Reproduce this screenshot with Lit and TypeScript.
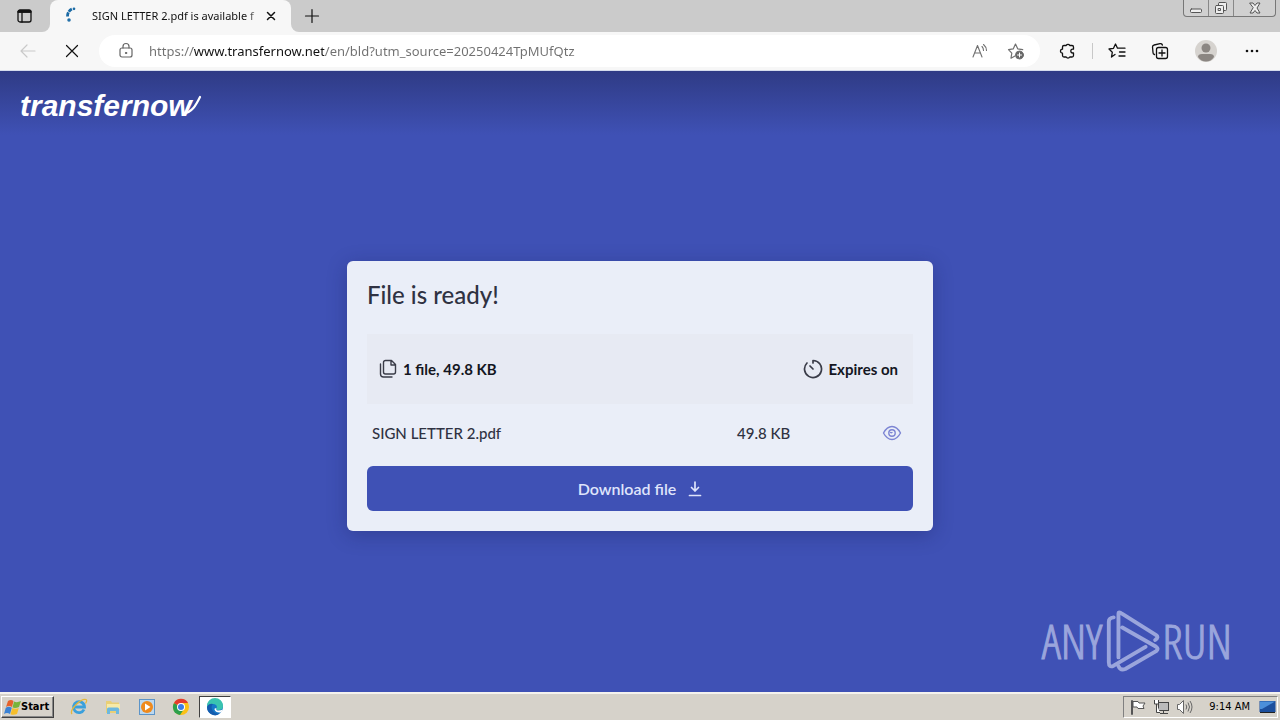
import { LitElement, html, css } from "lit";
import { customElement } from "lit/decorators.js";

const browserFont = css`"Noto Sans", "Open Sans", sans-serif`;

@customElement("browser-chrome")
class BrowserChrome extends LitElement {
  static styles = css`
    :host { display: block; font-family: ${browserFont}; background: #cbcbcb; }
    * { box-sizing: border-box; }
    button { border: 0; background: none; padding: 0; margin: 0; display: flex; align-items: center; justify-content: center; color: #111; font: inherit; }
    svg { display: block; fill: none; stroke: currentColor; stroke-linecap: round; stroke-linejoin: round; }
    .solid { fill: currentColor; stroke: none; }
    .strip { display: flex; height: 32px; align-items: stretch; }
    .lead { width: 50px; background: #cbcbcb; border-radius: 0 0 8px 0; }
    .under { background: #f7f7f7; display: flex; }
    .tab { width: 241px; background: #f7f7f7; border-radius: 8px 8px 0 0; display: flex; align-items: center; gap: 2px; padding: 0 12px 0 14px; }
    .spinner { color: #1a6aa5; margin-right: 10px; }
    .caption { flex: 1; min-width: 0; font-size: 11px; line-height: 16px; white-space: nowrap; color: #111; -webkit-mask-image: linear-gradient(90deg, #000 90%, transparent 105%); mask-image: linear-gradient(90deg, #000 90%, transparent 105%); }
    .rest { flex: 1; display: flex; justify-content: space-between; align-items: flex-start; background: #cbcbcb; border-radius: 0 0 0 8px; }
    .restwrap { flex: 1; display: flex; background: #f7f7f7; }
    .plus { width: 42px; height: 32px; }
    .window { display: flex; height: 17px; margin-right: 4px; border: 1px solid #777; border-top: 0; border-radius: 0 0 4px 4px; background: #d0d0d0; color: #555; }
    .window button { width: 25px; color: #555; border-right: 1px solid #888; }
    .window button:last-child { width: 41px; border-right: 0; }
    .bar { display: flex; align-items: center; height: 39px; background: #f7f7f7; border-bottom: 1px solid #d5dcec; padding-right: 5px; }
    .nav { width: 56px; height: 32px; }
    .back { color: #c9c9c9; }
    .stop { width: 32px; }
    .field { flex: 1; height: 32px; margin: 0 8px 0 11px; border-radius: 16px; background: #fff; display: flex; align-items: center; padding: 0 14px 0 20px; gap: 16px; color: #666; }
    .url { flex: 1; min-width: 0; border: 0; outline: 0; padding: 0; font-family: ${browserFont}; font-size: 13px; line-height: 20px; color: transparent; background: linear-gradient(90deg, #707070 44px, #111 44px, #111 175px, #707070 175px); -webkit-background-clip: text; background-clip: text; }
    .field button { color: #707070; width: 20px; }
    .tool { width: 40px; height: 32px; }
    .divider { width: 1px; height: 16px; background: #c8c8c8; margin: 0 4px; }
    .tools { display: flex; align-items: center; }
    .wide { width: 46px; }
  `;
  render() {
    return html`
      <div class="strip">
        <div class="under"><button class="lead" aria-label="Tab actions">
          <svg width="16" height="16" viewBox="0 0 16 16"><rect x="1" y="2" width="13" height="12" rx="2" stroke-width="1.300"/><path d="M1 4h13M5 5v9" stroke-width="1.300"/><path d="M2 3.400h11" stroke-width="2.600"/></svg>
        </button></div>
        <div class="tab">
          <svg class="spinner" width="16" height="18" viewBox="0 0 16 18"><path d="M3.500 9.500C3.500 5.500 5.500 3 8.500 1.800" stroke-width="2.800" stroke-dasharray="4 1" stroke-linecap="butt"/><circle cx="10" cy="1.800" r=".6" stroke-width="1.500"/><circle cx="5" cy="13" r="1" stroke-width="1.500"/></svg>
          <span class="caption">SIGN LETTER 2.pdf is available f</span>
          <button aria-label="Close tab"><svg width="16" height="16" viewBox="0 0 16 16"><path d="M4.500 4.500l7 7M11.500 4.500l-7 7" stroke-width="1.500"/></svg></button>
        </div>
        <div class="restwrap"><div class="rest">
          <button class="plus" aria-label="New tab"><svg width="16" height="16" viewBox="0 0 16 16"><path d="M8 1.500v13M1.500 8h13" stroke-width="1.200"/></svg></button>
          <div class="window">
            <button aria-label="Minimize"><svg width="14" height="14" viewBox="0 0 14 14"><rect x="1.500" y="8" width="11" height="3.500" rx="1" fill="#eee"/></svg></button>
            <button aria-label="Restore"><svg width="14" height="14" viewBox="0 0 14 14"><rect x="4.500" y="1.500" width="8" height="8" rx="1" fill="#eee"/><rect x="1.500" y="4.500" width="8" height="8" rx="1" fill="#eee"/><rect x="4.500" y="7.500" width="2" height="2"/></svg></button>
            <button aria-label="Close"><svg width="14" height="14" viewBox="0 0 14 14"><path d="M2 2h3l2 2.500L9 2h3L9 7l3 5H9L7 9.500 5 12H2l3-5z" fill="#eee"/></svg></button>
          </div>
        </div></div>
      </div>
      <div class="bar">
        <button class="nav back" aria-label="Back"><svg width="18" height="16" viewBox="0 0 18 16"><path d="M16 8H2M8 2L2 8l6 6" stroke-width="1.200"/></svg></button>
        <button class="nav stop" aria-label="Stop"><svg width="16" height="16" viewBox="0 0 16 16"><path d="M2.500 2.500l11 11M13.500 2.500l-11 11" stroke-width="1.200"/></svg></button>
        <div class="field">
          <svg width="14" height="18" viewBox="0 0 14 18"><rect x="1" y="6" width="12" height="9" rx="2" stroke-width="1.200"/><path d="M4 6V4.500a3 3 0 0 1 6 0V6" stroke-width="1.200"/><circle cx="7" cy="11" r=".7" fill="currentColor"/></svg>
          <input class="url" aria-label="Address" .value=${"https://www.transfernow.net/en/bld?utm_source=20250424TpMUfQtz"} />
          <button aria-label="Read aloud"><svg width="18" height="18" viewBox="0 0 18 18"><path d="M2 15L6.500 3.500 11 15M3.500 11h6M11 4.500q1.500 1.500 1.500 4M12.500 2.500q3 2.500 3 6" stroke-width="1.100"/></svg></button>
          <button aria-label="Add to favorites"><svg width="18" height="18" viewBox="0 0 18 18"><path d="M8 14l-4 2.200.8-5L1.500 7.600l4.700-.7L8.500 2l2.200 4.800 5 .8" stroke-width="1.200"/><circle cx="12.500" cy="13" r="4" fill="#666"/><path d="M12.500 11v4M10.500 13h4" stroke="#fff"/></svg></button>
        </div>
        <div class="tools">
          <button class="tool" aria-label="Extensions"><svg width="18" height="18" viewBox="0 0 18 18"><path d="M5 3.500h2.200a2 2 0 0 1 3.600 0H13a1.500 1.500 0 0 1 1.500 1.500v2.200h-.8a1.900 1.900 0 0 0 0 3.800h.8V13.500a1.500 1.500 0 0 1-1.500 1.500h-2.200a2 2 0 0 1-3.600 0H5a1.500 1.500 0 0 1-1.500-1.500V11.200a2 2 0 0 1 0-4V5A1.500 1.500 0 0 1 5 3.500z" stroke-width="1.300"/></svg></button>
          <span class="divider"></span>
          <button class="tool" aria-label="Favorites"><svg width="18" height="18" viewBox="0 0 18 18"><path d="M7 12.500L3.500 15l.8-4.700L1 7l4.500-.7L7.500 2l2 4.200H17M11.500 10H17M11 14h6" stroke-width="1.300"/></svg></button>
          <button class="wide tool" aria-label="Collections"><svg width="18" height="18" viewBox="0 0 18 18"><path d="M3.500 12.500a2 2 0 0 1-1.500-2L1.500 5a2 2 0 0 1 1.600-2L9 1.600a2 2 0 0 1 2.400 1.600" stroke-width="1.300"/><rect x="5.500" y="5.500" width="11" height="11" rx="2" stroke-width="1.300"/><path d="M11 8v6M8 11h6" stroke-width="1.300"/></svg></button>
          <button class="wide tool" aria-label="Profile"><svg class="solid" width="22" height="22" viewBox="0 0 22 22"><circle cx="11" cy="11" r="11" fill="#d6d3cf"/><circle cx="11" cy="8" r="4.500" fill="#8b8682"/><path d="M3 17q0-3 4-3h8q4 0 4 3-3 4.500-8 4.500T3 17z" fill="#8b8682"/></svg></button>
          <button class="wide tool" aria-label="Settings and more"><svg class="solid" width="16" height="16" viewBox="0 0 16 16"><circle cx="3" cy="8" r="1.300"/><circle cx="8" cy="8" r="1.300"/><circle cx="13" cy="8" r="1.300"/></svg></button>
        </div>
      </div>`;
  }
}

@customElement("transfer-page")
class TransferPage extends LitElement {
  static styles = css`
    :host { display: flex; flex-direction: column; flex: 1; min-height: 0; position: relative; font-family: Lato, "Open Sans", sans-serif; background: linear-gradient(#2f3b85, #3f51b5 64px); color: #2f3242; }
    * { box-sizing: border-box; }
    svg { display: block; fill: none; stroke: currentColor; stroke-linecap: round; stroke-linejoin: round; }
    header { height: 70px; padding: 0 20px; display: flex; align-items: center; }
    .brand { display: flex; align-items: center; color: #fff; text-decoration: none; font: italic 700 30px/36px "Liberation Sans", Arial, sans-serif; }
    .tail { margin-left: -10px; }
    main { flex: 1; display: flex; align-items: center; justify-content: center; padding: 0 20px 41px; }
    .card { width: 100%; max-width: 586px; padding: 20px; border-radius: 6px; background: #eaeef8; box-shadow: 0 4px 20px rgba(20, 28, 80, .3); }
    h1 { margin: 0 0 26px; font-size: 24px; line-height: 27px; font-weight: 500; }
    .summary { display: flex; justify-content: space-between; align-items: center; height: 70px; padding: 0 15px 0 12px; background: #e7eaf3; font-size: 15px; line-height: 20px; font-weight: 700; color: #14161f; }
    .item { display: flex; align-items: center; gap: 6px; }
    .item svg { color: #3a3c48; }
    table { width: 100%; border-collapse: collapse; font-size: 15px; line-height: 20px; font-weight: 500; }
    td { height: 58px; padding: 0 5px; }
    .size { width: 145px; }
    .action { width: 36px; }
    .eye { border: 0; padding: 0; background: none; color: #7c84d3; display: block; }
    .download { width: 100%; height: 45px; margin-top: 4px; border: 0; border-radius: 6px; background: #3f51b5; color: #dfe4fb; font: 600 16px/20px Lato, sans-serif; display: flex; align-items: center; justify-content: center; gap: 12px; }
    .watermark { position: absolute; right: 48px; bottom: 20px; display: flex; align-items: center; gap: 1px; color: #9aa5dc; font-family: "Open Sans Condensed Light", "Noto Sans ExtraCondensed", "Liberation Sans Narrow", "Roboto Condensed", sans-serif; font-size: 48px; line-height: 60px; -webkit-text-stroke: 1px #9aa5dc; }
  `;
  render() {
    return html`
      <header><a class="brand" href="#" aria-label="transfernow"><span>transfernow</span>
        <svg class="tail" width="20" height="22" viewBox="0 0 20 22"><path d="M1 18.500C10 18 14 10 18 2" stroke-width="2.200"/></svg></a></header>
      <main>
        <section class="card">
          <h1>File is ready!</h1>
          <div class="summary">
            <span class="item"><svg width="18" height="20" viewBox="0 0 18 20" stroke-width="1.400"><path d="M6.500 1.500h6l4 4V13a2 2 0 0 1-2 2h-8a2 2 0 0 1-2-2V3.500a2 2 0 0 1 2-2zM12 1.500V6h4.500M1.500 5v10a3 3 0 0 0 3 3H13"/></svg>1 file, 49.8 KB</span>
            <span class="item"><svg width="20" height="20" viewBox="0 0 20 20" stroke-width="1.700"><path d="M10 4V1.500a8.500 8.500 0 1 1-6 2.500M7 7l3 3"/></svg>Expires on</span>
          </div>
          <table><tbody><tr>
            <td>SIGN LETTER 2.pdf</td><td class="size">49.8 KB</td>
            <td class="action"><button class="eye" aria-label="Preview"><svg width="20" height="16" viewBox="0 0 20 16" stroke-width="1.400"><path d="M1.500 8Q5 1.500 10 1.500T18.500 8Q15 14.500 10 14.500T1.500 8z"/><circle cx="10" cy="8" r="3.200"/><path d="M10 7.500a1.500 1.500 0 0 1-1.500 0"/></svg></button></td>
          </tr></tbody></table>
          <button class="download">Download file
            <svg width="14" height="16" viewBox="0 0 14 16" stroke-width="1.700"><path d="M7 1v9M3.500 6.500L7 10l3.500-3.500M1.500 14.500h11"/></svg></button>
        </section>
      </main>
      <div class="watermark"><span>ANY</span>
        <svg width="58" height="62" viewBox="-2 0 60 64" stroke-width="4"><path d="M9 7.500Q4 8 4 12v42q0 6 5 3.500L42 38M14 49V4q0-3 4 0l35 22q3 2-1 5M18 18l35 20q3 2 0 4.500L21 61q-5 2-7-3"/></svg>
        <span>RUN</span></div>`;
  }
}

@customElement("task-bar")
class TaskBar extends LitElement {
  static styles = css`
    :host { display: flex; justify-content: space-between; align-items: center; height: 28px; padding: 0 2px 0 1px; box-sizing: border-box; background: #d6d2ca; border-top: 2px solid #f4f2ee; font: 11px/14px "DejaVu Sans Condensed", sans-serif; color: #000; }
    * { box-sizing: border-box; }
    svg { display: block; }
    .left { display: flex; align-items: center; }
    .start { width: 53px; height: 22px; padding: 0 2px; margin-right: 8px; display: flex; align-items: center; gap: 0; background: #d6d2ca; border: 1px solid; border-color: #fff #404040 #404040 #fff; box-shadow: inset -1px -1px #888; font: 700 11px/14px "DejaVu Sans Condensed", sans-serif; color: #000; }
    .app { width: 34px; height: 22px; padding: 0; border: 0; background: none; display: flex; align-items: center; justify-content: center; }
    .active { width: 32px; margin-left: 1px; background: #fff; border: 1px solid; border-color: #404040 #fff #fff #404040; }
    .tray { display: flex; align-items: center; height: 22px; padding: 0 1px 0 5px; border: 1px solid; border-color: #808080 #fff #fff #808080; gap: 6px; }
    .clock { margin: 0 3px 0 9px; }
  `;
  render() {
    return html`
      <div class="left">
        <button class="start"><svg width="17" height="17" viewBox="0 0 17 17"><path d="M4 2q3-2 5.500 0L8 8Q5 6 2 8z" fill="#e5622c"/><path d="M10 2.500q3 1.500 7-.5L15 8q-3.500 1.500-6.500.5z" fill="#78b43a"/><path d="M1.800 8.800q3-2 6 0L6 15q-3-2-6 0z" fill="#3b82d4"/><path d="M8.300 9q3.500 1.500 6.500 0L13 15q-3.500 1.500-6.500.2z" fill="#f6bf2c"/></svg>Start</button>
        <button class="app" aria-label="Internet Explorer"><svg width="18" height="18" viewBox="0 0 18 18" fill="none"><path d="M14 11.500a5.500 5.500 0 1 1 .5-2.500H5" stroke="#3aa0dc" stroke-width="2.800"/><path d="M2 16C-1 12 11 0 16 1.500q1.500 1-.5 4" stroke="#e5b73b" stroke-width="1.300"/></svg></button>
        <button class="app" aria-label="Explorer"><svg width="18" height="18" viewBox="0 0 18 18"><path d="M2 3h5l1 1.500h7V15H2z" fill="#e9cf76"/><path d="M3 6h13v5H3z" fill="#f7eaa8"/><path d="M3 16v-5q0-1.500 1.500-1.500h9q1.500 0 1.500 1.500v5h-3v-3H6v3z" fill="#6db8df"/></svg></button>
        <button class="app" aria-label="Media Player"><svg width="18" height="18" viewBox="0 0 18 18"><rect x="1.500" y="1.500" width="15" height="15" fill="#bcd8ef" stroke="#5c94c8"/><circle cx="9" cy="9" r="6" fill="#ef8a1d"/><path d="M7 5.500l5.500 3.500L7 12.500z" fill="#fff"/></svg></button>
        <button class="app" aria-label="Chrome"><svg width="18" height="18" viewBox="0 0 18 18"><circle cx="9" cy="9" r="8" fill="#fbc116"/><path d="M9 9L2 5a8 8 0 0 0 6 12l4-6z" fill="#2da04c"/><path d="M2 5a8 8 0 0 1 14 0H9v4z" fill="#e33b2e"/><circle cx="9" cy="9" r="4" fill="#fff"/><circle cx="9" cy="9" r="3" fill="#3b7de8"/></svg></button>
        <button class="app active" aria-label="Edge"><svg width="18" height="18" viewBox="0 0 18 18"><circle cx="9" cy="9" r="8" fill="#1678c8"/><path d="M1 8a8 8 0 0 1 16 0q0 4-4.500 4-2.500 0-2-1.500Q12 7 8 6 3 5.500 1 9z" fill="#3ac3b0"/><path d="M1 9q2-4 6-3-3 3 0 7t7 2q-3 3.500-7 2-6-2-6-8z" fill="#145cae"/><path d="M10.500 10.500q-1 2 2 2 2.500 0 4-1-.5 2.500-2 3-5 .5-6-3 0-2 2-1z" fill="#fff"/></svg></button>
      </div>
      <div class="tray">
        <svg width="18" height="16" viewBox="0 0 18 16" fill="#fff" stroke="#555"><path d="M3.500 15.500V1.500h-1v14zM4 2.500h5l1 1.500h6l-2 3 1 2.500H9L8 8H4z"/></svg>
        <svg width="17" height="16" viewBox="0 0 17 16" fill="#fff" stroke="#444"><rect x="5.500" y="3.500" width="10" height="8" fill="#bbb"/><path d="M7 14.500h8M10.500 12v2M1.500 1v4h4V1M3.500 5v8.500H7"/></svg>
        <svg width="18" height="16" viewBox="0 0 18 16" fill="none" stroke="#666"><path d="M1.500 5.500h2l4-4v13l-4-4h-2z" fill="#fff"/><path d="M10 5.500q1.500 2.500 0 5M12 3.500q3 4.500 0 9M14 2q4 6 0 12"/></svg>
        <time class="clock">9:14 AM</time>
        <svg width="17" height="16" viewBox="0 0 17 16"><rect x=".5" y="2" width="16" height="11" fill="#1c4f9d"/><path d="M1 2.500h15L3 10H1z" fill="#4b8fda"/><path d="M1 13.500h15" stroke="#222"/></svg>
      </div>`;
  }
}

@customElement("app-root")
class AppRoot extends LitElement {
  static styles = css`:host { display: flex; flex-direction: column; min-height: 100vh; }`;
  render() {
    return html`<browser-chrome></browser-chrome><transfer-page></transfer-page><task-bar></task-bar>`;
  }
}
